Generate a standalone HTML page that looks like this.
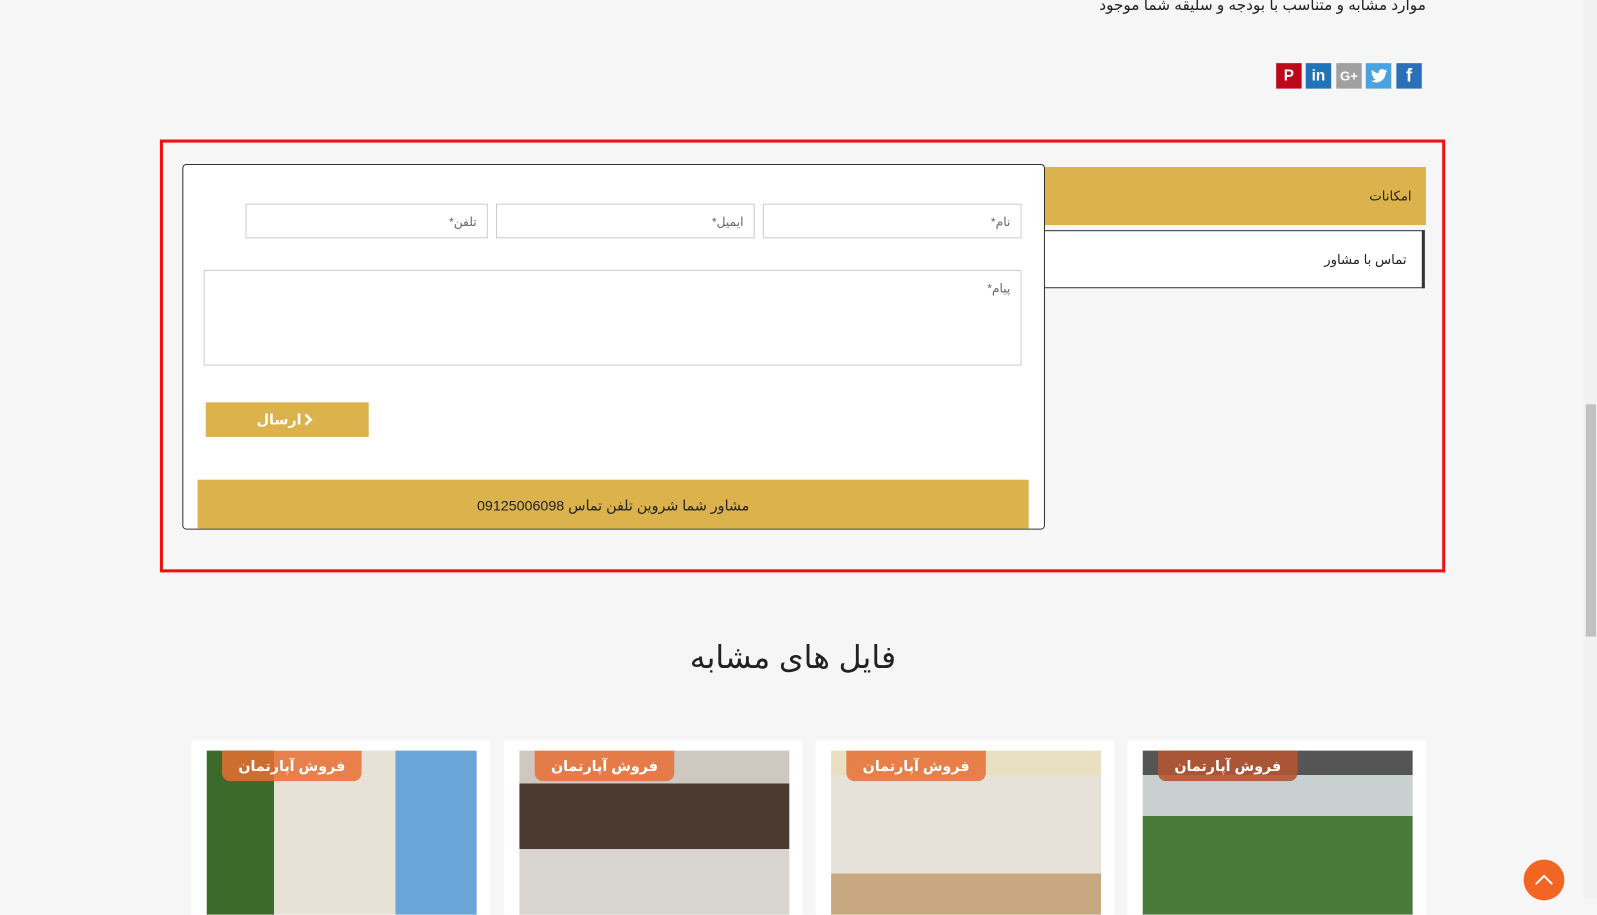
<!DOCTYPE html>
<html><head><meta charset="utf-8"><style>
*{box-sizing:border-box;margin:0;padding:0}
body{width:1597px;height:898px;overflow:hidden;background:#f6f6f6;font-family:"Liberation Sans","DejaVu Sans",sans-serif;position:relative;color:#222}
#w{position:absolute;left:0;top:0;width:1568px;height:882px;transform:scale(1.01849);transform-origin:0 0}
.a{position:absolute}
.soc{position:absolute;top:62px;width:25px;height:25px;color:#fff;font-weight:bold;font-size:15px;text-align:center;line-height:25px}
.in{position:absolute;top:200px;height:34px;border:1px solid #ccc;background:#fff;font-size:12px;color:#666;text-align:right;padding:10px 10px 0 0;direction:rtl}
.card{position:absolute;top:727px;width:293px;height:171px;background:#fff}
.img{position:absolute;left:15px;top:10px;width:265px;height:161px;overflow:hidden}
.tag{position:absolute;left:15px;top:0;height:30px;padding:0 16px;background:rgba(230,110,50,.85);color:#fff;font-size:14px;font-weight:bold;line-height:30px;border-radius:0 0 8px 8px}
</style></head><body><div id="w">
<div class="a" style="right:168px;top:-4px;font-size:15px;direction:rtl">موارد مشابه و متناسب با بودجه و سلیقه شما موجود</div>
<div class="soc" style="left:1253px;background:#bd081c">P</div>
<div class="soc" style="left:1282px;background:#1f74b8">in</div>
<div class="soc" style="left:1312px;background:#a0a0a0;font-size:13px">G+</div>
<div class="soc" style="left:1341px;background:#4aa3de"><svg width="25" height="25" viewBox="0 0 24 24"><path d="M20 7c-.6.3-1.2.4-1.8.5.7-.4 1.1-1 1.4-1.7-.6.4-1.3.6-2 .8a3.1 3.1 0 0 0-5.3 2.8C9.700 9.300 7.400 8.100 5.900 6.200c-.8 1.400-.4 3.200 1 4.100-.5 0-1-.2-1.400-.4 0 1.500 1.100 2.800 2.500 3.100-.5.100-1 .2-1.400.1.400 1.300 1.600 2.100 2.900 2.200A6.300 6.300 0 0 1 5 16.700 8.900 8.900 0 0 0 18.700 9.200c.5-.5 1-1.100 1.300-1.700z" fill="#fff"/></svg></div>
<div class="soc" style="left:1371px;background:#2a70b8;font-size:18px">f</div>

<div class="a" style="left:157px;top:137px;width:1262px;height:425px;border:3px solid #ee1111"></div>
<div class="a" style="left:1025px;top:164px;width:375px;height:57px;background:#dbb24b;font-size:13px;text-align:right;padding:21px 14px 0 0">امکانات</div>
<div class="a" style="left:1025px;top:226px;width:374px;height:57px;background:#fff;border-top:1px solid #333;border-bottom:1px solid #333;border-right:3px solid #333;font-size:13px;text-align:right;padding:20px 15px 0 0">تماس با مشاور</div>
<div class="a" style="left:179px;top:161px;width:847px;height:359px;background:#fff;border:1px solid #333;border-radius:4px"></div>
<div class="in" style="left:749px;width:254px">نام*</div>
<div class="in" style="left:487px;width:254px">ایمیل*</div>
<div class="in" style="left:241px;width:238px">تلفن*</div>
<div class="in" style="left:200px;top:265px;width:803px;height:94px">پیام*</div>
<div class="a" style="left:202px;top:395px;width:160px;height:34px;background:#dbb24b"></div>
<svg class="a" style="left:298px;top:406px" width="10" height="12"><path d="M2 1 L7 6 L2 11" stroke="#fff" stroke-width="2.5" fill="none"/></svg>
<div class="a" style="left:250px;top:395px;width:46px;height:34px;color:#fff;font-weight:bold;font-size:14px;text-align:right;line-height:34px;direction:rtl">ارسال</div>
<div class="a" style="left:194px;top:471px;width:816px;height:48px;background:#dbb24b;font-size:14px;text-align:center;line-height:50px;direction:rtl">مشاور شما شروین تلفن تماس 09125006098</div>

<div class="a" style="left:0;width:1557px;top:628px;text-align:center;font-size:31px">فایل های مشابه</div>

<div class="card" style="left:188px"><div class="img" style="background:linear-gradient(90deg,#3c6a2a 0 25%,#e8e2d6 25% 70%,#6ba6d8 70%)"><div class="tag">فروش آپارتمان</div></div></div>
<div class="card" style="left:495px"><div class="img" style="background:linear-gradient(180deg,#cfc8c0 0 20%,#4a3a30 20% 60%,#d8d4d0 60%)"><div class="tag">فروش آپارتمان</div></div></div>
<div class="card" style="left:801px"><div class="img" style="background:linear-gradient(180deg,#e8e0c0 0 15%,#e6e2da 15% 75%,#c8a880 75%)"><div class="tag">فروش آپارتمان</div></div></div>
<div class="card" style="left:1107px"><div class="img" style="background:linear-gradient(180deg,#555 0 15%,#c8d0d0 15% 40%,#4a7a3a 40%)"><div class="tag" style="background:rgba(180,85,50,.9)">فروش آپارتمان</div></div></div>

<div class="a" style="left:1496px;top:844px;width:40px;height:40px;border-radius:50%;background:#f26522"><svg width="40" height="40"><path d="M12 24 L20 16 L28 24" stroke="#fff" stroke-width="2" fill="none"/></svg></div>
<div class="a" style="left:1555px;top:0;width:14px;height:882px;background:#f1f1f1"></div>
<div class="a" style="left:1557px;top:397px;width:10px;height:228px;background:#c1c1c1"></div>
</div></body></html>
